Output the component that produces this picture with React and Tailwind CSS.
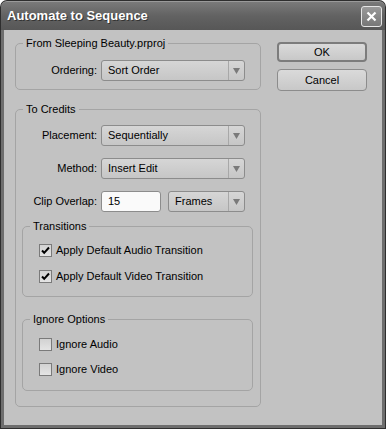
import React from "react";

function Select({ value, className = "" }) {
  return (
    <div className={`flex h-[21px] items-stretch rounded-[3px] border border-[#8c8c8c] bg-gradient-to-b from-[#d6d6d6] to-[#c6c6c6] ${className}`}>
      <span className="flex flex-1 items-center pl-[6px]">{value}</span>
      <span className="flex w-[16px] items-center justify-center border-l border-[#a8a8a8]">
        <svg width="7" height="6" viewBox="0 0 7 6">
          <path d="M0 0h7L3.5 6z" fill="#7a7a7a" />
        </svg>
      </span>
    </div>
  );
}

function Checkbox({ checked, label }) {
  return (
    <label className="flex h-[13px] items-center gap-[4px]">
      <span className="flex h-[13px] w-[13px] items-center justify-center border border-[#7a7a7a] bg-gradient-to-b from-[#d2d2d2] to-[#e4e4e4]">
        {checked && (
          <svg width="9" height="9" viewBox="0 0 9 9">
            <path d="M1 4.5l2.2 2.3L8 1.5" stroke="#000" strokeWidth="2" fill="none" />
          </svg>
        )}
      </span>
      <span>{label}</span>
    </label>
  );
}

function Group({ title, className = "", children }) {
  return (
    <fieldset className={`rounded-[5px] border border-[#a4a4a4] ${className}`}>
      <legend className="ml-[7px] px-[3px] leading-[14px]">{title}</legend>
      {children}
    </fieldset>
  );
}

export default function App() {
  return (
    <div className="flex h-[429px] w-[386px] flex-col rounded-t-[7px] bg-[#2e2e2e] p-px text-[11px] text-black" style={{ fontFamily: '"Liberation Sans", Arial, sans-serif' }}>
      <div className="flex h-[29px] items-center justify-between rounded-t-[6px] border-t border-[#9a9a9a] bg-gradient-to-b from-[#7a7a7a] via-[#626262] to-[#575757] pl-[6px] pr-[3px]">
        <span className="text-[13px] font-bold text-white [text-shadow:1px_1px_0_#333]">Automate to Sequence</span>
        <span className="flex h-[21px] w-[21px] items-center justify-center rounded-[3px] border border-[#e6e6e6] bg-gradient-to-b from-[#9a9a9a] to-[#777]">
          <svg width="11" height="11" viewBox="0 0 11 11">
            <path d="M1.5 1.5l8 8M9.5 1.5l-8 8" stroke="#fff" strokeWidth="2.2" />
          </svg>
        </span>
      </div>
      <div className="flex flex-1 items-start border-x-[3px] border-b-[3px] border-[#6e6e6e] bg-[#c2c2c2] pl-[11px] pt-[6px]">
        <div className="flex w-[246px] flex-col">
          <Group title="From Sleeping Beauty.prproj" className="pb-[8px] pt-[10px]">
            <div className="flex items-center">
              <span className="w-[81px] text-right">Ordering:</span>
              <Select value="Sort Order" className="ml-[4px] w-[144px]" />
            </div>
          </Group>
          <Group title="To Credits" className="mt-[12px] pb-[15px] pt-[9px]">
            <div className="flex flex-col gap-[12px]">
              <div className="flex items-center">
                <span className="w-[81px] text-right">Placement:</span>
                <Select value="Sequentially" className="ml-[4px] w-[144px]" />
              </div>
              <div className="flex items-center">
                <span className="w-[81px] text-right">Method:</span>
                <Select value="Insert Edit" className="ml-[4px] w-[144px]" />
              </div>
              <div className="flex items-center">
                <span className="w-[81px] text-right">Clip Overlap:</span>
                <div className="ml-[4px] flex h-[21px] w-[60px] items-center rounded-[3px] border border-[#8c8c8c] bg-[#fafafa] pl-[6px]">15</div>
                <Select value="Frames" className="ml-[7px] w-[77px]" />
              </div>
            </div>
            <Group title="Transitions" className="ml-[6px] mr-[7px] mt-[7px] pb-[13px] pt-[11px]">
              <div className="flex flex-col gap-[13px] pl-[16px]">
                <Checkbox checked label="Apply Default Audio Transition" />
                <Checkbox checked label="Apply Default Video Transition" />
              </div>
            </Group>
            <Group title="Ignore Options" className="ml-[6px] mr-[7px] mt-[15px] pb-[14px] pt-[12px]">
              <div className="flex flex-col gap-[12px] pl-[16px]">
                <Checkbox label="Ignore Audio" />
                <Checkbox label="Ignore Video" />
              </div>
            </Group>
          </Group>
        </div>
        <div className="ml-[16px] mt-[6px] flex w-[90px] flex-col gap-[7px]">
          <button className="h-[20px] rounded-[4px] border-2 border-[#7c7c7c] bg-gradient-to-b from-[#dadada] to-[#c8c8c8]">OK</button>
          <button className="h-[22px] rounded-[4px] border border-[#8c8c8c] bg-gradient-to-b from-[#dadada] to-[#c8c8c8]">Cancel</button>
        </div>
      </div>
    </div>
  );
}
